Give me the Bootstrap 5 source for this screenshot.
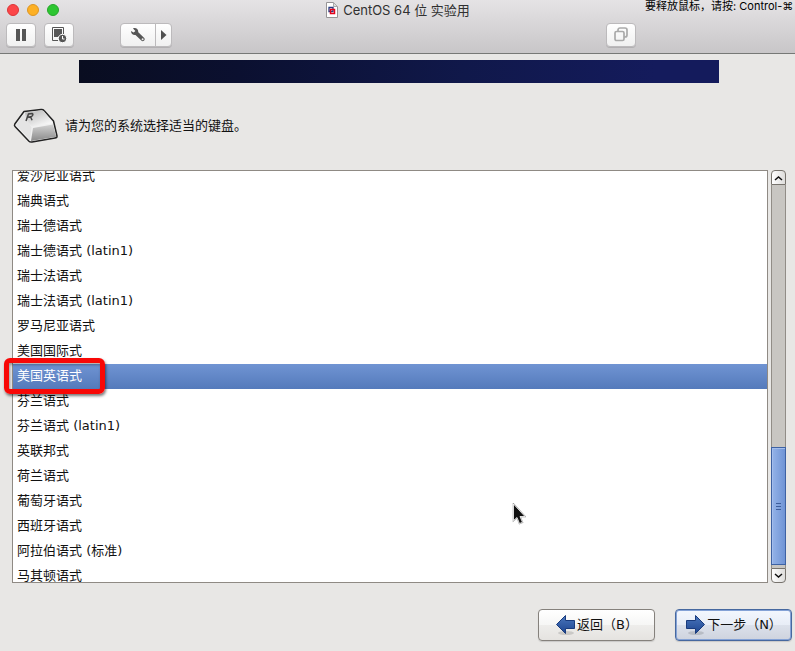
<!DOCTYPE html>
<html lang="zh-CN">
<head>
<meta charset="utf-8">
<meta name="viewport" content="width=device-width, initial-scale=1">
<title>CentOS 64 位 实验用</title>
<link href="https://cdn.jsdelivr.net/npm/bootstrap@5.3.0/dist/css/bootstrap.min.css" rel="stylesheet">
<style>
body { background: #e8e7e5; color: #111; font: 13px/25px "DejaVu Sans", "Noto Sans CJK SC", sans-serif; }
svg { display: block; flex: none; }
.mac-header { background: linear-gradient(#e5e3e5, #c8c6c8); border-bottom: 1px solid #767876; height: 54px; font-family: Inter, "Noto Sans CJK SC", sans-serif; }
.title-row { display: grid; grid-template-columns: 1fr auto 1fr; height: 20px; line-height: 20px; color: #303030; }
.lights { gap: 8px; padding-left: 7px; }
.light { width: 12px; height: 12px; padding: 0; border-radius: 50%; }
.light-red { background: #fc4648; border: 1px solid #dc3538; }
.light-amber { background: #fdb024; border: 1px solid #dd9523; }
.light-green { background: #2dc631; border: 1px solid #26a62a; }
.release-note { width: 150px; font-size: 11px; line-height: 13px; color: #000; }
.tool-row { padding: 3px 159px 0 6px; }
.tool { --bs-btn-padding-x: 0; --bs-btn-padding-y: 0; width: 30px; height: 24px; background: linear-gradient(#fff, #f0f0f0); border: 1px solid #bcbabc; border-radius: 4px; box-shadow: 0 1px 0 #b2b0b2; }
.tool-wide { width: 36px; }
.tool-narrow { width: 17px; }
.tool-group { margin-left: 46px; }
.banner { height: 23px; margin: 6px 76px 0 79px; background: linear-gradient(90deg, #090d20, #0b1030 25%, #10184a 60%, #141b5c 90%); }
.prompt-row { height: 85px; margin-bottom: 2px; padding-left: 12px; gap: 5px; }
.list-area { padding: 0 9px 0 12px; gap: 3px; min-height: 0; }
.keyboard-list { --bs-list-group-border-radius: 0; background: #fff; border: 1px solid #8f8a84; min-height: 0; }
.keyboard-list .list-group-item { flex: none; padding: 0 4px 2px; border: 0; line-height: 23px; color: #111; background: none; }
.keyboard-list .list-group-item.active { color: #fff; background: linear-gradient(#7094d3, #547abb); margin: 0; }
.choice-mark { position: absolute; left: -9px; top: 187px; width: 101px; height: 36px; border: 5px solid #f80806; border-radius: 6px; box-shadow: 1px 2px 3px #0008, inset 1px 2px 3px #0005; z-index: 3; pointer-events: none; }
.scroll { width: 15px; }
.scroll-end { height: 15px; padding: 0; border: 1px solid #77736d; background: linear-gradient(90deg, #fff, #dedddb); }
.scroll-up { border-radius: 4px 4px 0 0; }
.scroll-down { border-radius: 0 0 4px 4px; }
.trough { background: #c8c6c2; border: solid #918d87; border-width: 0 1px; padding-bottom: 3px; }
.thumb { height: 31%; margin: 0 -1px; border: 1px solid #3e62a3; background: linear-gradient(90deg, #94b3e8, #7094d5); box-shadow: inset 1px 1px #a3bdec; }
.nav-row { padding: 26px 3px 10px; gap: 20px; }
.wizard-btn { --bs-btn-padding-x: 0; --bs-btn-padding-y: 0; --bs-btn-font-size: 13px; --bs-btn-color: #111; width: 117px; height: 32px; border: 1px solid #85817c; border-radius: 4px; background: linear-gradient(#fff, #f6f6f5 50%, #eeedeb 50%, #e5e3e0); box-shadow: 0 1px 1px #0002; }
.wizard-next { border-color: #46689f; background: linear-gradient(#f3f7fe, #e8edf6 50%, #dce1eb 50%, #ced3de); box-shadow: inset 0 0 0 1px #84a2d6, 0 1px 1px #0002; }
.pointer { position: absolute; left: 512px; top: 503px; z-index: 5; pointer-events: none; }
</style>
</head>
<body class="d-flex flex-column vh-100 overflow-hidden position-relative">
<header class="mac-header flex-shrink-0">
  <div class="title-row">
    <div class="lights d-flex align-items-center">
      <button class="light light-red" aria-label="关闭"></button>
      <button class="light light-amber" aria-label="最小化"></button>
      <button class="light light-green" aria-label="缩放"></button>
    </div>
    <div class="d-flex align-items-center gap-1">
      <svg width="14" height="16" viewBox="0 0 14 16"><path d="M1.500.5h7l4 4v11h-11z" fill="#fff" stroke="#969496"/><path d="M8.500.5v4h4z" fill="#ddd" stroke="#aaa"/><path d="M4 5.500h4v4H4z" fill="none" stroke="#263a80" stroke-width="1.300"/><path d="M5.500 7.500h4v4h-4z" fill="none" stroke="#e50019" stroke-width="1.500"/></svg>
      <span>CentOS 64 位 实验用</span>
    </div>
    <div class="release-note ms-auto text-nowrap overflow-hidden">要释放鼠标，请按: Control-⌘</div>
  </div>
  <div class="tool-row d-flex">
    <button class="tool btn d-flex align-items-center justify-content-center" aria-label="暂停"><svg width="10" height="12"><path d="M0 0h4v12H0zM6 0h4v12H6z" fill="#565656"/></svg></button>
    <button class="tool btn d-flex align-items-center justify-content-center ms-2" aria-label="快照"><svg width="16" height="16" viewBox="0 0 16 16"><path d="M7 13.500H1.500V.5h11V7" fill="none" stroke="#555"/><path d="M3 2h8v5l-4 3H3z" fill="#565656"/><circle cx="11.500" cy="11.500" r="4.200" fill="#555" stroke="#fafafa"/><path d="M11.500 9v3h2" fill="none" stroke="#fff"/></svg></button>
    <div class="tool-group btn-group">
      <button class="tool tool-wide btn d-flex align-items-center justify-content-center" aria-label="设置"><svg width="16" height="16" viewBox="0 0 16 16"><path d="M3 1.400C5.500.3 8.500 2 8.300 5.200l5.700 5.600c2 2-.8 4.600-2.700 2.700L5.500 8C3 8.300.8 6.500 1 4l2.600 1.600L5.400 4z" fill="#565656"/><circle cx="12.600" cy="12.200" r="1" fill="#eee"/></svg></button>
      <button class="tool tool-narrow btn d-flex align-items-center justify-content-center" aria-label="展开"><svg width="6" height="10"><path d="M0 0l5.500 5L0 10z" fill="#505050"/></svg></button>
    </div>
    <button class="tool btn d-flex align-items-center justify-content-center ms-auto" aria-label="窗口"><svg width="16" height="16" viewBox="0 0 16 16" fill="none" stroke="#aaa" stroke-width="1.700"><path d="M5 4V3a2 2 0 0 1 2-2h5a2 2 0 0 1 2 2v5a2 2 0 0 1-2 2h-1"/><rect x="2" y="4.500" width="9" height="9" rx="1.500"/></svg></button>
  </div>
</header>
<main class="d-flex flex-column flex-grow-1 overflow-hidden">
  <div class="banner flex-shrink-0"></div>
  <div class="prompt-row d-flex align-items-center flex-shrink-0">
    <svg width="48" height="36" viewBox="0 0 48 36">
      <defs><linearGradient id="keyTop" x1="0" y1="0" x2=".7" y2="1"><stop offset="0" stop-color="#b5b5b5"/><stop offset="1" stop-color="#fafafa"/></linearGradient><linearGradient id="keyFront" x1="0" y1="0" x2="0" y2="1"><stop offset="0" stop-color="#d2d2d2"/><stop offset="1" stop-color="#8b8b8b"/></linearGradient></defs>
      <path d="M12 3.500 29 1.500q2-.2 3 1l9.500 10.500 3.500 15q.2 1.800-2 2L20 34q-2 .3-3-.7L3 18.500q-1-1-.2-2.500z" fill="#f0f0f0" stroke="#222" stroke-width="1.500" stroke-linejoin="round"/>
      <path d="m13 4.500 16-2q2-.2 3 1l9 11.500-21 3.500-6-6z" fill="url(#keyTop)"/>
      <path d="m21 20 20-3.500 3.200 12.300L19 33z" fill="url(#keyFront)"/>
      <path d="m4 17 8-11.500 7.500 14L18 32z" fill="#e4e4e4"/>
      <path d="m14 13 2.500-7 3.500-.5q2 1-.4 3l-3.500.8m2.400-.5 1.600 3.500" fill="none" stroke="#444" stroke-width="1.500"/>
    </svg>
    <span>请为您的系统选择适当的键盘。</span>
  </div>
  <div class="list-area d-flex flex-grow-1">
    <div class="keyboard-list flex-grow-1 position-relative">
      <div class="list-group justify-content-center h-100 overflow-hidden" role="group" aria-label="键盘">
        <button class="list-group-item list-group-item-action">爱沙尼亚语式</button>
        <button class="list-group-item list-group-item-action">瑞典语式</button>
        <button class="list-group-item list-group-item-action">瑞士德语式</button>
        <button class="list-group-item list-group-item-action">瑞士德语式 (latin1)</button>
        <button class="list-group-item list-group-item-action">瑞士法语式</button>
        <button class="list-group-item list-group-item-action">瑞士法语式 (latin1)</button>
        <button class="list-group-item list-group-item-action">罗马尼亚语式</button>
        <button class="list-group-item list-group-item-action">美国国际式</button>
        <button class="list-group-item list-group-item-action active" aria-current="true">美国英语式</button>
        <button class="list-group-item list-group-item-action">芬兰语式</button>
        <button class="list-group-item list-group-item-action">芬兰语式 (latin1)</button>
        <button class="list-group-item list-group-item-action">英联邦式</button>
        <button class="list-group-item list-group-item-action">荷兰语式</button>
        <button class="list-group-item list-group-item-action">葡萄牙语式</button>
        <button class="list-group-item list-group-item-action">西班牙语式</button>
        <button class="list-group-item list-group-item-action">阿拉伯语式 (标准)</button>
        <button class="list-group-item list-group-item-action">马其顿语式</button>
      </div>
      <span class="choice-mark"></span>
    </div>
    <div class="scroll d-flex flex-column flex-shrink-0">
      <button class="scroll-end scroll-up d-flex align-items-center justify-content-center" aria-label="向上滚动"><svg width="9" height="6"><path d="M1 5l3.500-3L8 5" fill="none" stroke="#111" stroke-width="1.500"/></svg></button>
      <div class="trough flex-grow-1 d-flex flex-column justify-content-end">
        <div class="thumb d-flex align-items-center justify-content-center"><svg width="5" height="7"><path d="M0 .5h5M0 3.500h5M0 6.500h5" stroke="#3d5e9c"/></svg></div>
      </div>
      <button class="scroll-end scroll-down d-flex align-items-center justify-content-center" aria-label="向下滚动"><svg width="9" height="6"><path d="M1 1l3.500 3L8 1" fill="none" stroke="#111" stroke-width="1.500"/></svg></button>
    </div>
  </div>
</main>
<footer class="nav-row d-flex justify-content-end flex-shrink-0">
  <button class="wizard-btn btn d-flex align-items-center justify-content-center">
    <svg width="22" height="22" viewBox="0 0 22 22"><defs><linearGradient id="arrowBlue" x1="0" y1="0" x2="0" y2="1"><stop offset="0" stop-color="#4a76bd"/><stop offset="1" stop-color="#1d4590"/></linearGradient></defs><ellipse cx="11" cy="19" rx="8" ry="2" fill="#0002"/><path d="M1.500 10.500l9-9v5h9v8h-9v5z" fill="url(#arrowBlue)" stroke="#193b7d"/></svg>
    <span>返回（B）</span>
  </button>
  <button class="wizard-btn wizard-next btn d-flex align-items-center justify-content-center">
    <svg width="22" height="22" viewBox="0 0 22 22"><ellipse cx="11" cy="19" rx="8" ry="2" fill="#0002"/><path d="M19.500 10.500l-9-9v5h-9v8h9v5z" fill="url(#arrowBlue)" stroke="#193b7d"/></svg>
    <span>下一步（N）</span>
  </button>
</footer>
<svg class="pointer" width="14" height="22" viewBox="0 0 14 22"><path d="M1.500 1v16.500l3.500-3 2.500 6 3-1.200L8 13.500h5z" fill="#111" stroke="#999" stroke-width="1.500"/><path d="M1.500 1v16.500l3.500-3 2.500 6 3-1.200L8 13.500h5z" fill="#111" stroke="#fff" stroke-width=".8"/></svg>
<script src="https://cdn.jsdelivr.net/npm/bootstrap@5.3.0/dist/js/bootstrap.bundle.min.js"></script>
</body>
</html>
